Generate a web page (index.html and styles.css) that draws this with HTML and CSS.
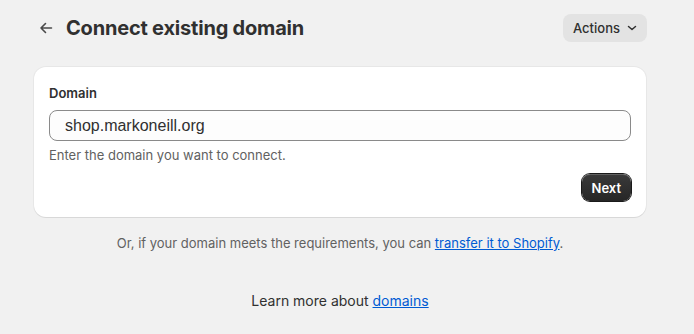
FILE: index.html
```html
<!DOCTYPE html>
<html lang="en">
<head>
    <meta charset="UTF-8">
    <meta name="viewport" content="width=device-width, initial-scale=1.0">
    <title>Connect existing domain</title>
    <link rel="stylesheet" href="styles.css">
</head>
<body>
    <div class="page">
        <div class="header">
            <div class="title-wrap">
                <a href="#" class="back" aria-label="Back">
                    <svg width="20" height="20" viewBox="0 0 20 20" fill="none">
                        <path d="M15.5 10H5M9.5 5.5 5 10l4.5 4.5" stroke="#4a4a4a" stroke-width="1.6" stroke-linecap="round" stroke-linejoin="round"/>
                    </svg>
                </a>
                <h1>Connect existing domain</h1>
            </div>
            <button class="actions">
                Actions
                <svg width="16" height="16" viewBox="0 0 16 16" fill="none">
                    <path d="M4.5 6.5 8 9.5l3.5-3" stroke="#303030" stroke-width="1.5" stroke-linecap="round" stroke-linejoin="round"/>
                </svg>
            </button>
        </div>

        <!-- Domain form -->
        <div class="card">
            <label for="domain">Domain</label>
            <input type="text" id="domain" value="shop.markoneill.org">
            <p class="help">Enter the domain you want to connect.</p>
            <div class="card-footer">
                <button class="btn-primary">Next</button>
            </div>
        </div>

        <p class="transfer">Or, if your domain meets the requirements, you can <a href="#">transfer it to Shopify</a>.</p>

        <p class="learn">Learn more about <a href="#">domains</a></p>
    </div>
</body>
</html>
```

FILE: styles.css
```css
* {
    margin: 0;
    padding: 0;
    box-sizing: border-box;
}

body {
    font-family: Inter, "Noto Sans", sans-serif;
    background: #f1f1f1;
    color: #303030;
    font-size: 13px;
    line-height: 20px;
}

.page {
    padding: 14px 48px 0 34px;
}

.header {
    display: flex;
    align-items: center;
    justify-content: space-between;
    height: 28px;
}

.title-wrap {
    display: flex;
    align-items: center;
    gap: 10px;
}

.back {
    display: flex;
    margin-left: 2px;
    width: 20px;
    height: 20px;
}

h1 {
    font-size: 20px;
    font-weight: 700;
    line-height: 28px;
    color: #303030;
    letter-spacing: -0.2px;
}

.actions {
    display: flex;
    align-items: center;
    gap: 4px;
    height: 28px;
    margin-right: -1px;
    padding: 0 7px 0 10px;
    background: #e3e3e3;
    border: none;
    border-radius: 8px;
    font-family: inherit;
    font-size: 13px;
    font-weight: 500;
    color: #303030;
}

.card {
    margin-top: 25px;
    background: #fff;
    border-radius: 12px;
    box-shadow: 0 1px 0 rgba(26, 26, 26, 0.07), 0 0 0 1px rgba(0, 0, 0, 0.04);
    padding: 16px 15px;
}

label {
    display: block;
    font-weight: 600;
    margin-bottom: 7px;
}

input[type="text"] {
    width: 100%;
    height: 31px;
    padding: 0 15px;
    border: 1px solid #8a8a8a;
    border-radius: 8px;
    background: #fdfdfd;
    font-family: "Liberation Sans", Arial, sans-serif;
    font-size: 16px;
    color: #303030;
}

.help {
    margin-top: 4px;
    color: #616161;
}

.card-footer {
    display: flex;
    justify-content: flex-end;
    margin-top: 9px;
}

.btn-primary {
    height: 27px;
    padding: 0 10px;
    background: linear-gradient(#3a3a3a, #262626);
    color: #fff;
    border: none;
    border-radius: 8px;
    font-family: inherit;
    font-size: 13px;
    font-weight: 600;
    box-shadow: 0 0 0 1px #1a1a1a, inset 0 1px 0 rgba(255, 255, 255, 0.2);
}

.transfer {
    margin-top: 16px;
    text-align: center;
    color: #616161;
}

.transfer a, .learn a {
    color: #005bd3;
    text-decoration: underline;
}

.learn {
    margin-top: 38px;
    text-align: center;
    font-size: 14px;
    color: #303030;
}
```
